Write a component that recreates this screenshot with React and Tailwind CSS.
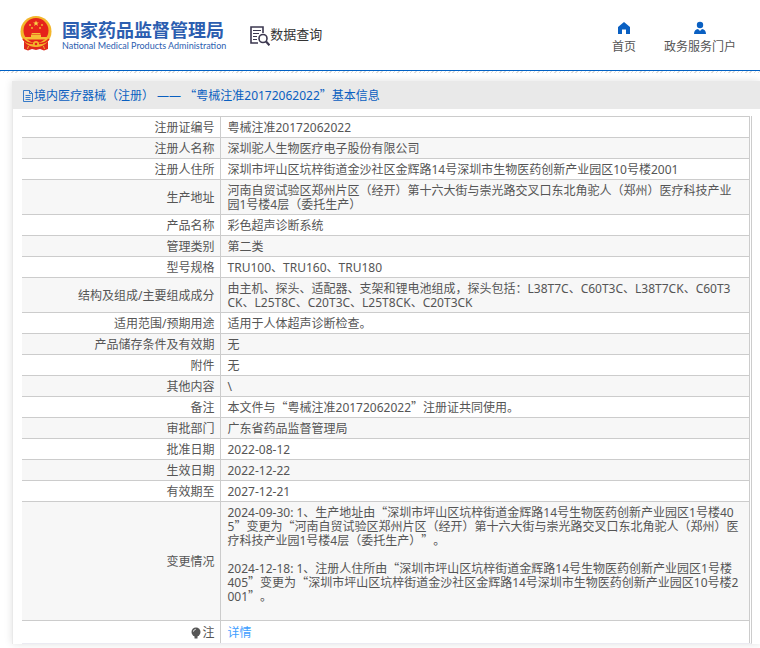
import React from "react";

const rows = [
  ["注册证编号", "粤械注准20172062022"],
  ["注册人名称", "深圳驼人生物医疗电子股份有限公司"],
  ["注册人住所", "深圳市坪山区坑梓街道金沙社区金辉路14号深圳市生物医药创新产业园区10号楼2001"],
  ["生产地址", "河南自贸试验区郑州片区（经开）第十六大街与崇光路交叉口东北角驼人（郑州）医疗科技产业园1号楼4层（委托生产）"],
  ["产品名称", "彩色超声诊断系统"],
  ["管理类别", "第二类"],
  ["型号规格", "TRU100、TRU160、TRU180"],
  ["结构及组成/主要组成成分", "由主机、探头、适配器、支架和锂电池组成，探头包括：L38T7C、C60T3C、L38T7CK、C60T3{CK}、L25T8C、C20T3C、L25T8CK、C20T3CK"],
  ["适用范围/预期用途", "适用于人体超声诊断检查。"],
  ["产品储存条件及有效期", "无"],
  ["附件", "无"],
  ["其他内容", "\\"],
  ["备注", "本文件与“粤械注准20172062022”注册证共同使用。"],
  ["审批部门", "广东省药品监督管理局"],
  ["批准日期", "2022-08-12"],
  ["生效日期", "2022-12-22"],
  ["有效期至", "2027-12-21"],
  [
    "变更情况",
    "2024-09-30: 1、生产地址由“深圳市坪山区坑梓街道金辉路14号生物医药创新产业园区1号楼405”变更为“河南自贸试验区郑州片区（经开）第十六大街与崇光路交叉口东北角驼人（郑州）医疗科技产业园1号楼4层（委托生产）”。\n\n2024-12-18: 1、注册人住所由“深圳市坪山区坑梓街道金辉路14号生物医药创新产业园区1号楼{405}”变更为“深圳市坪山区坑梓街道金沙社区金辉路14号深圳市生物医药创新产业园区10号楼2001”。\n\n",
  ],
];

// Curly quotes take the full-width CJK glyphs instead of the narrow Latin ones;
// a part in braces is kept on one line.
function Text({ children }) {
  return children.split(/([“”]|\{[^}]+\})/).map((part, i) => {
    if (/^[“”]$/.test(part)) {
      return <span key={i} className="font-['Noto_Sans_CJK_SC',sans-serif] leading-[0]">{part}</span>;
    }
    if (part.startsWith("{")) {
      return <span key={i} className="whitespace-nowrap">{part.slice(1, -1)}</span>;
    }
    return part;
  });
}

function Emblem() {
  return (
    <svg viewBox="0 0 32 35" className="h-[35px] w-8" aria-hidden="true">
      <path d="M4 25 L9 28 L23 28 L28 25 L28 33 L24 34.5 L20 33 L16 34 L12 33 L8 34.5 L4 33Z" fill="#e02a1e" />
      <circle cx="16" cy="15.5" r="15.5" fill="#f3b62b" />
      <circle cx="16" cy="14.5" r="12.500" fill="#e5231b" />
      <path d="M16 4.500l.8 2h2.100l-1.700 1.300.7 2.100-1.900-1.300-1.900 1.300.7-2.100-1.700-1.300h2.100z" fill="#f9d648" />
      <g fill="#f5bd35">
        <circle cx="10" cy="9" r=".9" />
        <circle cx="22" cy="9" r=".9" />
        <circle cx="12" cy="12" r=".9" />
        <circle cx="20" cy="12" r=".9" />
        <path d="M12 17h8l1 1.500h-10z M11 19h10v2h-10z M5 21h22v2.500h-22z" />
      </g>
      <path d="M3 23c3 4 6 4.500 10 4.500M29 23c-3 4-6 4.500-10 4.500" stroke="#e5231b" strokeWidth="1.500" fill="none" />
      <circle cx="16" cy="28" r="3" fill="#f3b62b" />
      <circle cx="16" cy="28" r="1.300" fill="#e5231b" />
      <path d="M8.500 30l-1 3M23.500 30l1 3" stroke="#f3b62b" strokeWidth="1" />
    </svg>
  );
}

export default function App() {
  return (
    <div lang="zh-CN" className="overflow-hidden bg-white pb-1 font-['Noto_Sans','Noto_Sans_CJK_SC',sans-serif] text-xs text-[#555] [text-spacing-trim:space-all]">
      <header className="flex h-[71px] items-start border-b border-[#0060c4] pr-6 pl-5">
        <a href="#home" className="mt-4 flex">
          <Emblem />
          <span className="ml-2.5 flex flex-col text-[#2c5eb0]">
            <span className="mt-1 text-lg leading-5 font-bold whitespace-nowrap">国家药品监督管理局</span>
            <span className="font-['Lato',sans-serif] text-[9px] leading-3 whitespace-nowrap">National Medical Products Administration</span>
          </span>
        </a>
        <a href="#query" className="mt-5 ml-6 flex items-center text-[13px] leading-7 text-[#333]">
          <svg viewBox="0 0 20 20" className="mt-1 h-5 w-5" fill="none" stroke="#3c3850" aria-hidden="true">
            <path d="M8 17H1V1h12v6" strokeWidth="1.600" />
            <path d="M3 4.500h8M3 7.500h6M3 10.500h4M3 13.500h4" strokeWidth="1.200" />
            <circle cx="13" cy="12.500" r="4" strokeWidth="1.600" />
            <path d="M16 15.500l3.500 3.800" strokeWidth="2.200" />
          </svg>
          数据查询
        </a>
        <nav className="mt-5 ml-auto flex gap-7 leading-4">
          <a href="#index" className="flex flex-col items-center gap-[3px]">
            <svg viewBox="0 0 14 14" className="h-4 w-3.5" fill="#0a60c2" aria-hidden="true">
              <path d="M7 1l6 5v7H9V8.500H5V13H1V6z" />
            </svg>
            首页
          </a>
          <a href="#portal" className="flex flex-col items-center gap-[3px]">
            <svg viewBox="0 0 14 14" className="h-4 w-3.5" fill="#0a60c2" aria-hidden="true">
              <circle cx="7" cy="4" r="3.200" />
              <path d="M1 13c0-3 1.500-4.500 4-5l2 2 2-2c2.500.5 4 2 4 5z" />
            </svg>
            政务服务门户
          </a>
        </nav>
      </header>
      <div className="h-0.5 bg-[repeating-linear-gradient(135deg,#ddd_0_1px,#fff_1px_3px)]" />
      <main className="mt-2 ml-3 border-l border-[#e9e9e9] shadow-[0_0_8px_rgba(0,0,0,0.12)]">
        <h1 className="flex h-7 items-center bg-[#e9e9e9] pt-0.5 pl-[9px] text-[#0a5fc0]">
          <svg viewBox="0 0 12 12" className="h-3 w-3" fill="none" stroke="#0a5fc0" aria-hidden="true">
            <path d="M1.500 .5h6l3 3v8h-9z M7.500.5v3h3 M3.500 5.500h5M3.500 7.500h5M3.500 9.500h5" strokeWidth=".8" />
          </svg>
          <span className="whitespace-pre"><Text>境内医疗器械（注册） —— “粤械注准20172062022”基本信息</Text></span>
        </h1>
        <div className="mt-[7px] mr-2 ml-[9px] border-r border-b border-r-[#ccc] border-b-[#ebebf2] pr-px">
          <table className="w-full table-fixed border-collapse border-r border-[#ccc] leading-[14px]">
            <colgroup>
              <col className="w-[198px]" />
              <col />
            </colgroup>
            <tbody>
              {rows.map(([label, value]) => (
                <tr key={label} className="border-t border-[#ccc] odd:bg-white even:bg-[#f7f7f7]">
                  <th scope="row" className="border-r border-[#ccc] pt-1 pr-[5px] pb-0.5 text-right font-normal">{label}</th>
                  <td className="pt-1 pr-1.5 pb-0.5 pl-[7px] break-all whitespace-pre-line"><Text>{value}</Text></td>
                </tr>
              ))}
              <tr className="border-t border-[#ccc]">
                <th scope="row" className="border-r border-[#ccc] pt-[5px] pr-[5px] pb-[3px] font-normal">
                  <span className="flex items-center justify-end">
                    <svg viewBox="0 0 12 12" className="h-3 w-3" aria-hidden="true">
                      <circle cx="6" cy="5" r="4.500" fill="#555" />
                      <path d="M4.500 9h3v2.500h-3z" fill="#555" />
                      <path d="M3.500 4.500c.3-1.300 1-2 2.200-2.200" stroke="#fff" fill="none" />
                    </svg>
                    注
                  </span>
                </th>
                <td className="pt-[5px] pb-[3px] pl-[7px]"><a href="#detail" className="text-[#409eff]">详情</a></td>
              </tr>
            </tbody>
          </table>
        </div>
      </main>
    </div>
  );
}
